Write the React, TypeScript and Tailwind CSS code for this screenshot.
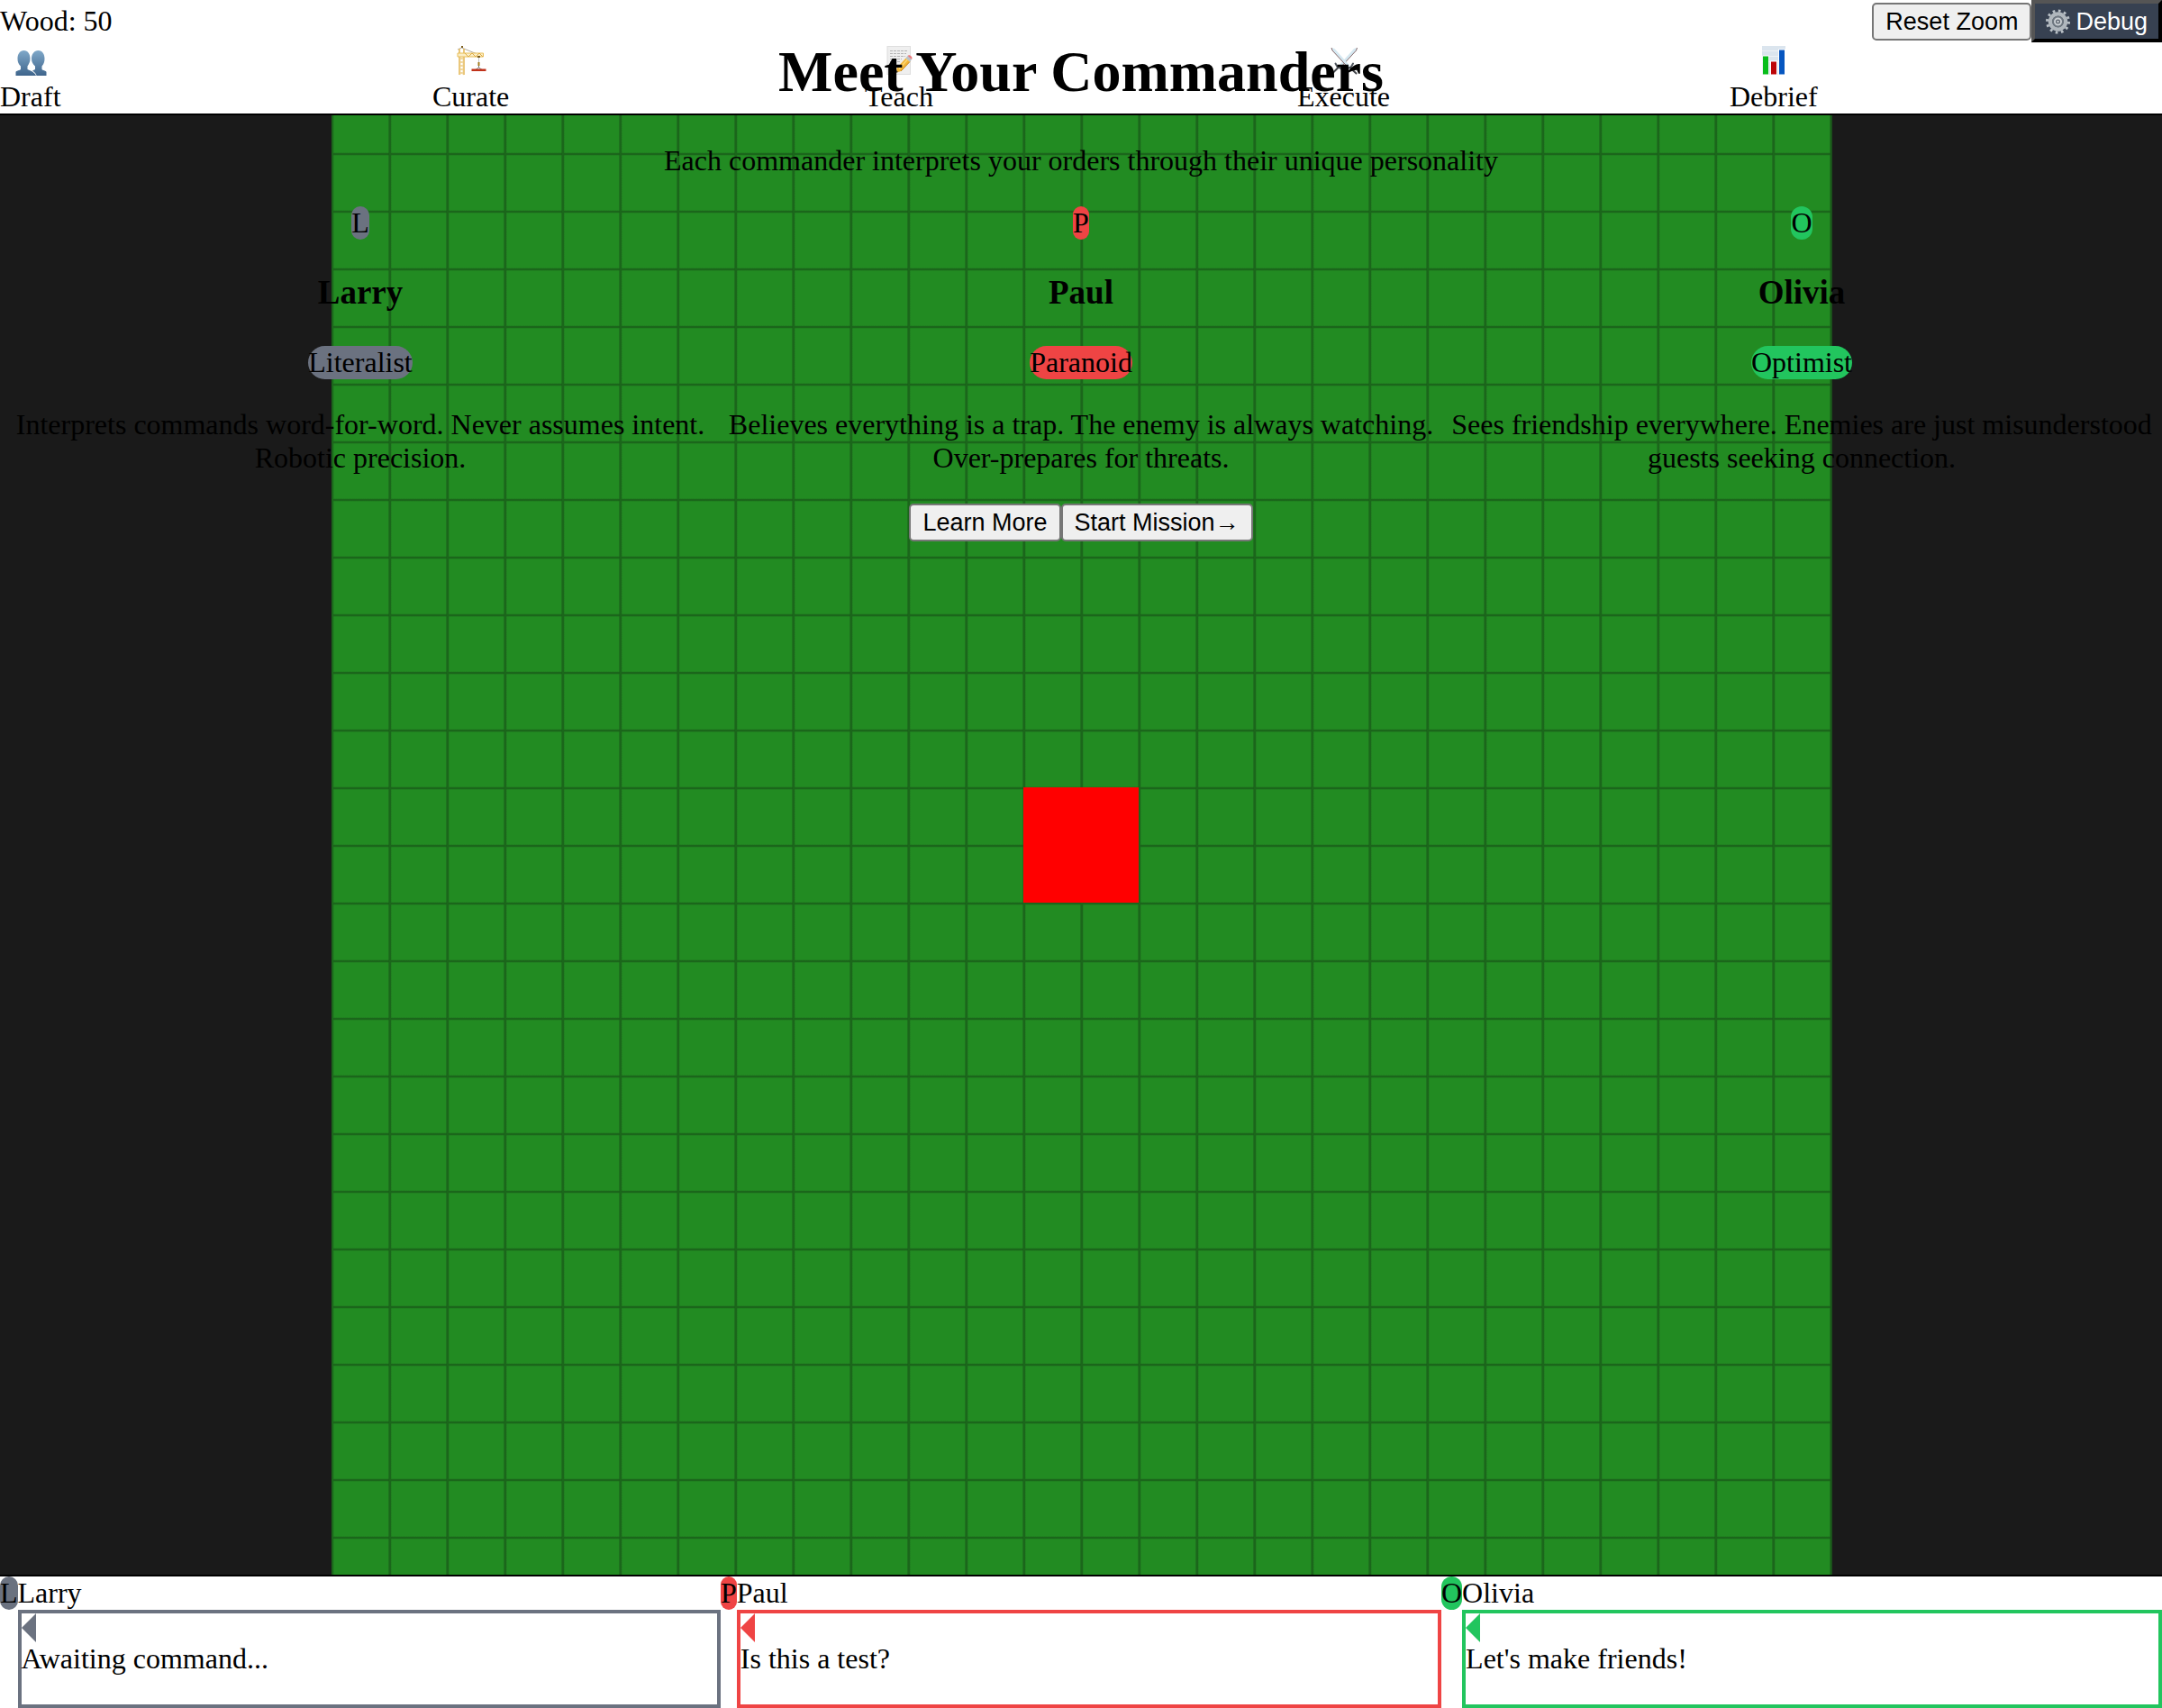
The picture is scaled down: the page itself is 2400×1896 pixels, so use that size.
import type { ReactNode } from "react";

function PeopleIcon() {
  return (
    <svg width="40" height="42" viewBox="0 0 40 42" aria-hidden="true">
      <defs>
        <linearGradient id="people" x1="0" y1="0" x2="0" y2="1">
          <stop offset="0" stopColor="#7fa8c9" />
          <stop offset="1" stopColor="#3f658c" />
        </linearGradient>
      </defs>
      <g fill="url(#people)">
        <path d="M12.500 9C17 9 19.500 13 19.500 18C19.500 22 18 24 16.500 26.500V30L21 32C23 33 25.500 35 26 37H3.500V33C3.500 31.500 8.500 31 9 30V26.500C6.500 24 5.500 22 5.500 18C5.500 13 8 9 12.500 9Z" />
        <path d="M28.500 9C33 9 35.500 13 35.500 18C35.500 22 34.500 24 32.500 26.500V30C33 31 37.500 31.500 37.500 33V37H26.500C26 34.500 24.500 33 22 31.500L25 30V26.500C22.500 24 21 22 21 18C21 13 24 9 28.500 9Z" />
      </g>
    </svg>
  );
}

function CraneIcon() {
  return (
    <svg width="40" height="42" viewBox="0 0 40 42" fill="none" aria-hidden="true">
      <path d="M5 8L9.500 6L29 14" stroke="#b3ac9c" strokeWidth="1" />
      <path d="M9 5H11" stroke="#7b5c1c" strokeWidth="2" />
      <path d="M7 7V36M12 7V36" stroke="#e3b552" strokeWidth="1.500" />
      <path d="M7 12L12 16L7 20L12 24L7 28L12 32L7 36M12 12L7 16L12 20L7 24L12 28L7 32L12 36" stroke="#ecca7d" strokeWidth="1" />
      <path d="M5 12H33.500V16H5Z" fill="#fbeec6" stroke="#e8bd58" strokeWidth="1" />
      <path d="M13 12L17 16L21 12L25 16L29 12L33 16" stroke="#e0ac45" strokeWidth="1" />
      <path d="M27 16H30" stroke="#7b5c1c" strokeWidth="2" />
      <path d="M28.500 17V24" stroke="#c4c4c4" strokeWidth="1" />
      <path d="M28.500 22V26" stroke="#a67d20" strokeWidth="2" />
      <path d="M28.500 26V28L24 31M28.500 28L33 31" stroke="#777" strokeWidth="1" />
      <rect x="20.500" y="29.500" width="16" height="2.500" fill="#c0321a" />
    </svg>
  );
}

function MemoIcon() {
  return (
    <svg width="40" height="42" viewBox="0 0 40 42" fill="none" aria-hidden="true">
      <rect x="7" y="4.500" width="25.500" height="31" fill="#efefef" stroke="#dedede" />
      <path d="M10 9.500H29M10 12.500H28M10 15.500H27M10 18.500H23M10 21.500H21" stroke="#b4b4b4" strokeDasharray="3 1" />
      <path d="M16 34L18 28L27.500 17.500L32 21.500L22 32Z" fill="#f4b73a" />
      <path d="M20 29.500L29.500 19" stroke="#fbd877" strokeWidth="1.500" />
      <path d="M22 32L32 21.500" stroke="#c98418" />
      <path d="M27.500 17.500L29.500 15L34 19L32 21.500Z" fill="#b9c2c9" />
      <path d="M29.500 15C31 12.500 36 16 34 19Z" fill="#e8787b" />
      <path d="M16 34L17 31L19 33Z" fill="#333" />
    </svg>
  );
}

function SwordsIcon() {
  return (
    <svg width="40" height="42" viewBox="0 0 40 42" fill="none" aria-hidden="true">
      <path d="M34.500 6L31 7L14 26L16 28L33.500 9Z" fill="#d5e8f1" />
      <path d="M34.500 6L33.500 9L16 28" stroke="#86696b" />
      <path d="M6 6L9.500 7L26.500 26L24.500 28L7 9Z" fill="#d5e8f1" />
      <path d="M6 6L7 9L24.500 28" stroke="#86696b" />
      <path d="M10.500 23.500L12.500 27L17 29.500M30 23.500L28 27L23.500 29.500" stroke="#4e555d" strokeWidth="2" strokeLinecap="round" />
      <path d="M26.500 28L33.500 34.500M13.500 28L7 34.500" stroke="#44474c" strokeWidth="2" strokeLinecap="round" />
    </svg>
  );
}

function ChartIcon() {
  return (
    <svg width="40" height="42" viewBox="0 0 40 42" aria-hidden="true">
      <rect x="7" y="4" width="26" height="32" fill="#dbe5ee" />
      <path d="M7 9.500H33M7 15.500H33M7 21.500H33" stroke="#edf2f6" />
      <rect x="7.500" y="14.500" width="7" height="21.500" fill="#fff" />
      <rect x="16" y="20.500" width="8" height="15.500" fill="#fff" />
      <rect x="25" y="7.500" width="8" height="28.500" fill="#fff" />
      <rect x="8" y="15.500" width="6" height="20" fill="#08bd1b" />
      <rect x="17" y="21.500" width="6" height="14" fill="#bd0508" />
      <rect x="26" y="8.500" width="6" height="27" fill="#0656c0" />
    </svg>
  );
}

function GearIcon() {
  return (
    <svg width="27" height="28" viewBox="0 0 27 28" fill="none" aria-hidden="true">
      <circle cx="13.500" cy="14" r="12" stroke="#b9c0c6" strokeWidth="3" strokeDasharray="2.700 3.583" />
      <circle cx="13.500" cy="14" r="8.500" stroke="#b0b7bd" strokeWidth="4.500" />
      <circle cx="13.500" cy="14" r="6.500" fill="#6e7780" />
      <circle cx="13.500" cy="14" r="3.500" fill="#59616b" stroke="#c9ced2" strokeWidth="2" />
      <circle cx="13.500" cy="14" r="1.200" fill="#d6dadd" />
    </svg>
  );
}

const phases: { name: string; icon: ReactNode }[] = [
  { name: "Draft", icon: <PeopleIcon /> },
  { name: "Curate", icon: <CraneIcon /> },
  { name: "Teach", icon: <MemoIcon /> },
  { name: "Execute", icon: <SwordsIcon /> },
  { name: "Debrief", icon: <ChartIcon /> },
];

const commanders = [
  {
    name: "Larry",
    trait: "Literalist",
    bio: "Interprets commands word-for-word. Never assumes intent. Robotic precision.",
    line: "Awaiting command...",
    fill: "bg-[#6b7280]",
    border: "border-[#6b7280]",
    arrow: "border-r-[#6b7280]",
  },
  {
    name: "Paul",
    trait: "Paranoid",
    bio: "Believes everything is a trap. The enemy is always watching. Over-prepares for threats.",
    line: "Is this a test?",
    fill: "bg-[#ef4444]",
    border: "border-[#ef4444]",
    arrow: "border-r-[#ef4444]",
  },
  {
    name: "Olivia",
    trait: "Optimist",
    bio: "Sees friendship everywhere. Enemies are just misunderstood guests seeking connection.",
    line: "Let's make friends!",
    fill: "bg-[#22c55e]",
    border: "border-[#22c55e]",
    arrow: "border-r-[#22c55e]",
  },
];

function PlainButton({ children }: { children: ReactNode }) {
  return (
    <button
      type="button"
      className="h-[42px] rounded-[5px] border-2 border-[#767676] bg-[#efefef] px-[13px] font-['Liberation_Sans',Arial,sans-serif] text-[27px] leading-[30px] text-black"
    >
      {children}
    </button>
  );
}

function Header() {
  return (
    <header className="border-b-2 border-black bg-white">
      <div className="flex h-[47px] items-center justify-between">
        <div>Wood: 50</div>
        <div className="flex items-center">
          <PlainButton>Reset Zoom</PlainButton>
          <button
            type="button"
            className="flex h-[47px] items-center gap-1.5 border-4 border-t-[#555] border-r-black border-b-black border-l-[#555] bg-[#374151] px-3 font-['Liberation_Sans',Arial,sans-serif] text-[27px] leading-[30px] text-white"
          >
            <GearIcon />
            Debug
          </button>
        </div>
      </div>
      <nav className="grid grid-cols-5">
        {phases.map((phase) => (
          <div key={phase.name} className="flex w-fit flex-col items-center">
            {phase.icon}
            <span>{phase.name}</span>
          </div>
        ))}
      </nav>
    </header>
  );
}

function Board() {
  return (
    <main className="flex min-h-0 flex-1 items-center justify-center overflow-hidden bg-[#1a1a1a]">
      <div className="flex size-[1664px] shrink-0 items-center justify-center bg-[#228b22] bg-[linear-gradient(to_right,#1a5c1a80_1px,#1b661b_1px,#1b661b_2px,#1b661b_2px,#1b661b_3px,#1a5c1a33_3px,#1a5c1a33_4px,transparent_4px),linear-gradient(to_bottom,#1a5c1a33_1px,#1b661b_1px,#1b661b_3px,#1a5c1a33_3px,#1a5c1a33_4px,transparent_4px)] bg-size-[64px_64px] bg-position-[-1px_-1px] shadow-[2px_0_0_#1b521b]">
        <div className="size-32 bg-[#ff0000]" />
      </div>
    </main>
  );
}

function Intro() {
  return (
    <section className="absolute inset-x-0 top-0 pt-[43px] text-center">
      <h1 className="text-[64px] leading-[74px] font-bold">Meet Your Commanders</h1>
      <p className="mt-[43px]">Each commander interprets your orders through their unique personality</p>
      <div className="mt-8 grid grid-cols-3">
        {commanders.map((c) => (
          <article key={c.name} className="flex flex-col items-center">
            <div className={`rounded-full ${c.fill}`}>{c.name[0]}</div>
            <h3 className="my-[37px] text-[37px] leading-[44px] font-bold">{c.name}</h3>
            <div className={`rounded-full ${c.fill}`}>{c.trait}</div>
            <p className="my-8">{c.bio}</p>
          </article>
        ))}
      </div>
      <div className="flex justify-center">
        <PlainButton>Learn More</PlainButton>
        <PlainButton>Start Mission→</PlainButton>
      </div>
    </section>
  );
}

function Footer() {
  return (
    <footer className="grid grid-cols-3 border-t-2 border-black bg-white">
      {commanders.map((c) => (
        <div key={c.name} className="flex items-start">
          <div className={`rounded-full ${c.fill}`}>{c.name[0]}</div>
          <div className="flex-1">
            <div>{c.name}</div>
            <div className={`border-4 pb-8 ${c.border}`}>
              <div className={`size-0 border-y-16 border-r-16 border-y-transparent ${c.arrow}`} />
              <p>{c.line}</p>
            </div>
          </div>
        </div>
      ))}
    </footer>
  );
}

export default function App() {
  return (
    <div className="relative flex h-screen flex-col overflow-hidden font-['Liberation_Serif','Times_New_Roman',serif] text-[32px] leading-[37px] text-black">
      <Header />
      <Board />
      <Footer />
      <Intro />
    </div>
  );
}
